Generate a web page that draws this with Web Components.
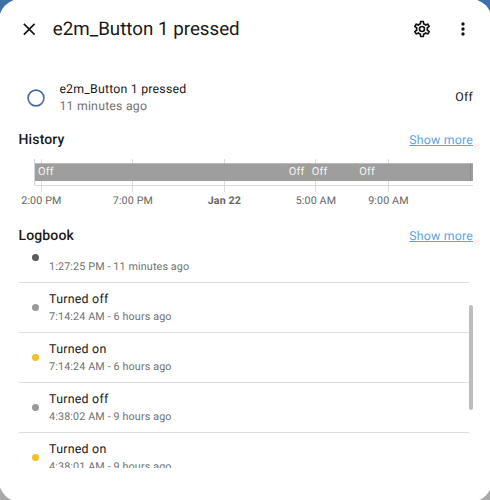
<!DOCTYPE html>
<html lang="en">
<head>
<meta charset="utf-8">
<title>e2m_Button 1 pressed</title>
<style>
html,body{margin:0;height:100%;overflow:hidden}
body{font-family:Roboto,"Liberation Sans",sans-serif;color:#191919;background:linear-gradient(#3f70a8 50%,#a9a9a9 50%);text-rendering:geometricPrecision}
</style>
</head>
<body>
<more-info-dialog>
  <dialog-header slot="header">e2m_Button 1 pressed</dialog-header>
  <state-info name="e2m_Button 1 pressed" changed="11 minutes ago">Off</state-info>
  <section-header class="history">History</section-header>
  <history-chart></history-chart>
  <section-header class="logbook">Logbook</section-header>
  <log-book>
    <log-entry color="#5b5b5f" when="1:27:25 PM - 11 minutes ago"></log-entry>
    <log-entry color="#999999" when="7:14:24 AM - 6 hours ago">Turned off</log-entry>
    <log-entry color="#f0c028" when="7:14:24 AM - 6 hours ago">Turned on</log-entry>
    <log-entry color="#999999" when="4:38:02 AM - 9 hours ago">Turned off</log-entry>
    <log-entry color="#f0c028" when="4:38:01 AM - 9 hours ago">Turned on</log-entry>
  </log-book>
</more-info-dialog>
<script>
const define = (name, render) => customElements.define(name, class extends HTMLElement {
  connectedCallback() {
    if (!this.shadowRoot) this.attachShadow({mode: 'open'}).innerHTML = render(this);
  }
});

define('more-info-dialog', () => `
<style>
:host{display:block;box-sizing:border-box;width:493px;height:503px;margin:-1px 0 0 -1px;background:#fff;border-radius:21.5px;padding:1px 19px 0 19.5px;overflow:hidden}
::slotted(*){box-sizing:border-box}
</style>
<slot name="header"></slot><slot></slot>`);

define('dialog-header', () => `
<style>
:host{display:flex;align-items:center;height:58px;padding:0 0 0 .5px}
h1{flex:1;margin:0 0 0 13.3px;font-size:18.75px;font-weight:400;line-height:24px;white-space:nowrap}
svg{display:block;width:20px;height:20px;flex:none}
.menu{margin-left:21px}
</style>
<svg viewBox="0 0 24 24" style="width:20.5px;height:20.5px" fill="#191919"><path d="M19 6.41 17.59 5 12 10.59 6.41 5 5 6.41 10.59 12 5 17.59 6.41 19 12 13.41 17.59 19 19 17.59 13.41 12z"/></svg>
<h1><slot></slot></h1>
<svg viewBox="0 0 24 24" fill="#111"><path d="M12 8A4 4 0 0 1 16 12A4 4 0 0 1 12 16A4 4 0 0 1 8 12A4 4 0 0 1 12 8M12 10A2 2 0 0 0 10 12A2 2 0 0 0 12 14A2 2 0 0 0 14 12A2 2 0 0 0 12 10M10 22C9.75 22 9.54 21.82 9.5 21.58L9.13 18.93C8.5 18.68 7.96 18.34 7.44 17.94L4.95 18.95C4.73 19.03 4.46 18.95 4.34 18.73L2.34 15.27C2.21 15.05 2.27 14.78 2.46 14.63L4.57 12.97L4.5 12L4.57 11L2.46 9.37C2.27 9.22 2.21 8.95 2.34 8.73L4.34 5.27C4.46 5.05 4.73 4.96 4.95 5.05L7.44 6.05C7.96 5.66 8.5 5.32 9.13 5.07L9.5 2.42C9.54 2.18 9.75 2 10 2H14C14.25 2 14.46 2.18 14.5 2.42L14.87 5.07C15.5 5.32 16.04 5.66 16.56 6.05L19.05 5.05C19.27 4.96 19.54 5.05 19.66 5.27L21.66 8.73C21.79 8.95 21.73 9.22 21.54 9.37L19.43 11L19.5 12L19.43 13L21.54 14.63C21.73 14.78 21.79 15.05 21.66 15.27L19.66 18.73C19.54 18.95 19.27 19.04 19.05 18.95L16.56 17.95C16.04 18.34 15.5 18.68 14.87 18.93L14.5 21.58C14.46 21.82 14.25 22 14 22H10M11.25 4L10.88 6.61C9.68 6.86 8.62 7.5 7.85 8.39L5.44 7.35L4.69 8.65L6.8 10.2C6.4 11.37 6.4 12.64 6.8 13.8L4.68 15.36L5.43 16.66L7.86 15.62C8.63 16.5 9.68 17.14 10.87 17.38L11.24 20H12.76L13.13 17.39C14.32 17.14 15.37 16.5 16.14 15.62L18.57 16.66L19.32 15.36L17.2 13.81C17.6 12.64 17.6 11.37 17.2 10.2L19.31 8.65L18.56 7.35L16.15 8.39C15.38 7.5 14.32 6.86 13.12 6.62L12.75 4H11.25Z"/></svg>
<svg class="menu" viewBox="0 0 24 24" fill="#111"><path d="M12 16a2 2 0 1 1 0 4 2 2 0 0 1 0-4m0-6a2 2 0 1 1 0 4 2 2 0 0 1 0-4m0-6a2 2 0 1 1 0 4 2 2 0 0 1 0-4"/></svg>`);

define('state-info', el => `
<style>
:host{display:flex;align-items:center;height:39px;margin-top:20px;padding-left:7.2px;font-size:12.3px;letter-spacing:.22px}
svg{display:block;width:20px;height:20px;flex:none}
.info{flex:1;margin:2px 0 0 13.7px;line-height:17px}
.when{color:#727272}
</style>
<svg viewBox="0 0 20 20"><circle cx="10" cy="10" r="7.9" fill="none" stroke="#4569a5" stroke-width="1.6"/></svg>
<div class="info"><div>${el.getAttribute('name')}</div><div class="when">${el.getAttribute('changed')}</div></div>
<slot></slot>`);

define('section-header', () => `
<style>
:host{display:flex;align-items:baseline;justify-content:space-between;height:20px;line-height:20px;font-size:14px;font-weight:500;letter-spacing:.14px}
:host(.history){margin-top:13px}
:host(.logbook){margin-top:16px}
a{font-size:12.3px;font-weight:400;letter-spacing:.22px;color:#5aa5e8;text-decoration:underline}
</style>
<span><slot></slot></span><a>Show more</a>`);

define('history-chart', () => {
  const ticks = [[41, '2:00 PM'], [132.5, '7:00 PM'], [224, 'Jan 22'], [315.5, '5:00 AM'], [388, '9:00 AM']];
  const offs = [38, 288.8, 311.8, 359.3];
  return `
<style>
:host{display:block;height:60px;margin:0 -18px 0 -18.5px}
svg{display:block}
text{font-size:10.7px;letter-spacing:.14px}
.state{font-size:11px}
</style>
<svg width="490" height="60" viewBox="0 150 490 60">
<path d="M34.5 159V186" stroke="#d5d5d5"/>
<path d="M34 185.5H473" stroke="#dcdcdc"/>
${ticks.map(([x]) => `<path d="M${Math.floor(x) + .5} 159V192" stroke="#dcdcdc"/>`).join('')}
<rect x="35" y="163.3" width="438" height="17.7" fill="#9e9e9e"/>
<path d="M285.5 163.3V181M308.5 163.3V181M356.5 163.3V181" stroke="#a69f88"/>
<path d="M470.5 163.3V181" stroke="#8d8d8d"/>
${offs.map(x => `<text class="state" x="${x}" y="175" fill="#f4f4f4">Off</text>`).join('')}
${ticks.map(([x, t]) => `<text x="${x + .4}" y="204" text-anchor="middle" fill="#666"${t === 'Jan 22' ? ' font-weight="700"' : ''}>${t}</text>`).join('')}
</svg>`;
});

define('log-book', () => `
<style>
:host{display:flex;justify-content:space-between;align-items:flex-start;height:221.5px;overflow:hidden}
.rows{width:450.5px;margin-top:-13.2px}
.thumb{width:4px;height:105px;margin:59px 0 0;border-radius:2px;background:#bdbdbd}
</style>
<div class="rows"><slot></slot></div><div class="thumb"></div>`);

define('log-entry', el => `
<style>
:host{display:flex;align-items:center;box-sizing:border-box;height:50px;border-bottom:1px solid #dedede;padding-left:13.8px}
i{width:7px;height:7px;border-radius:50%;flex:none;background:${el.getAttribute('color')}}
.text{margin:.5px 0 0 9.8px;font-size:12.4px;letter-spacing:.24px}
.name{height:17px;line-height:17px}
.when{height:17px;line-height:17px;font-size:10.75px;letter-spacing:.13px;color:#727272}
</style>
<i></i><div class="text"><div class="name"><slot></slot></div><div class="when">${el.getAttribute('when')}</div></div>`);
</script>
</body>
</html>
